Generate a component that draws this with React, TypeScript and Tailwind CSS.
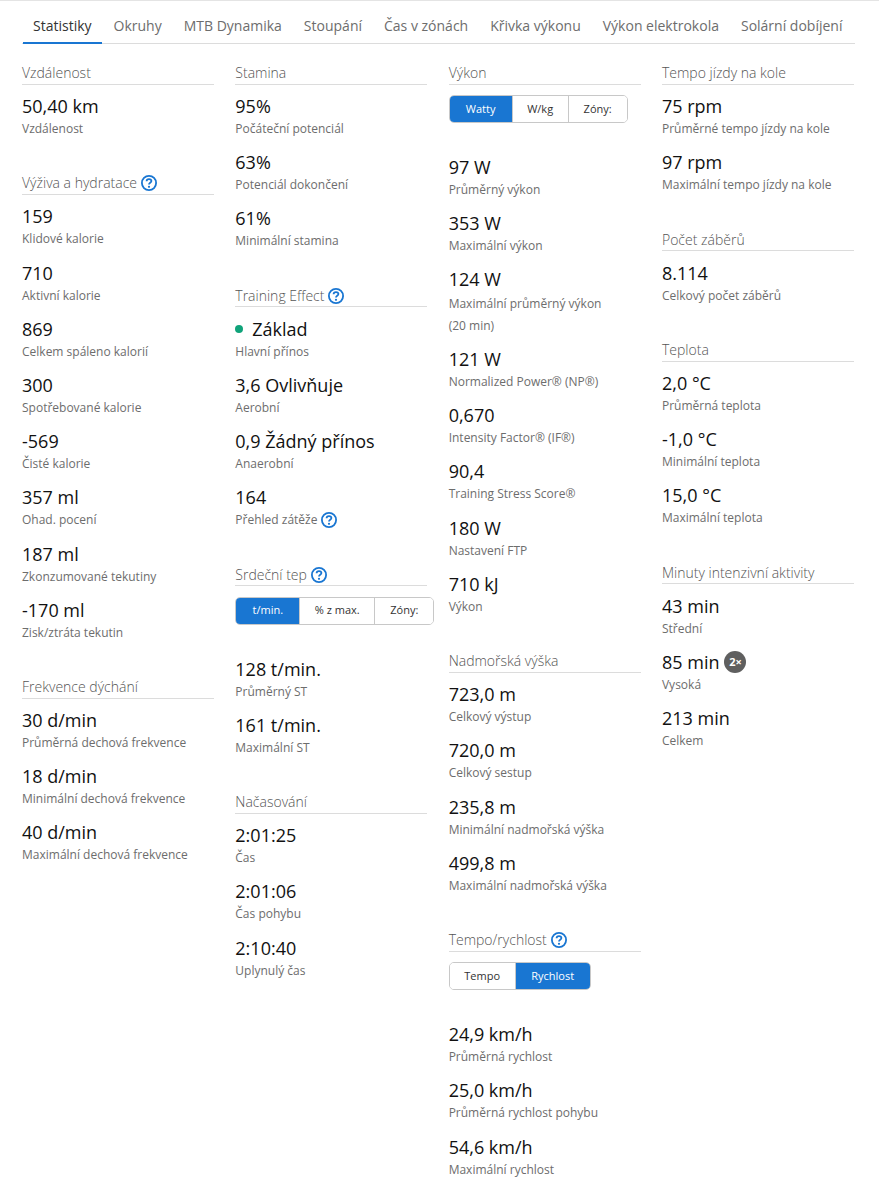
import type { ReactNode } from "react"

const tabs = [
  "Statistiky",
  "Okruhy",
  "MTB Dynamika",
  "Stoupání",
  "Čas v zónách",
  "Křivka výkonu",
  "Výkon elektrokola",
  "Solární dobíjení",
]

function Help() {
  return (
    <svg viewBox="0 0 16 16" className="ml-1 h-4 w-4 shrink-0" fill="none" stroke="#1976d2">
      <circle cx="8" cy="8" r="7.1" strokeWidth="1.8" />
      <path d="M5.6 6.3c0-1.4 1.1-2.2 2.4-2.2 1.3 0 2.4.8 2.4 2 0 1.8-2.4 1.7-2.4 3.4" strokeWidth="1.8" />
      <circle cx="8" cy="11.8" r="1.1" fill="#1976d2" stroke="none" />
    </svg>
  )
}

function Heading({ title, help }: { title: string; help?: boolean }) {
  return (
    <div className="mb-[9.4px] flex h-[21px] items-center border-b border-[#dcdcdc] pb-px text-sm leading-5 font-light text-[#555]">
      {title}
      {help && <Help />}
    </div>
  )
}

function Stat({ value, label, children }: { value: ReactNode; label: ReactNode; children?: ReactNode }) {
  return (
    <div className="mb-[10.2px]">
      <div className="flex h-6 items-center text-lg leading-6 text-[#111]">
        {value}
        {children}
      </div>
      <div className="text-xs leading-[22px] text-[#6d6d6d]">{label}</div>
    </div>
  )
}

function Toggle({ items, active }: { items: { text: string; w: string }[]; active: string }) {
  return (
    <div className="mt-[10.4px] mb-8 flex h-7 w-max overflow-hidden rounded-[5px] border border-[#c8c8c8]">
      {items.map((item) => (
        <div
          key={item.text}
          className={`flex items-center justify-center border-l border-[#c8c8c8] text-[11px] font-medium first:border-l-0 ${item.w} ${
            item.text === active ? "bg-[#1976d2] text-white" : "bg-white text-[#333]"
          }`}
        >
          {item.text}
        </div>
      ))}
    </div>
  )
}

function Section({ children }: { children: ReactNode }) {
  return <section className="mb-[34px]">{children}</section>
}

export default function App() {
  return (
    <div className="min-h-[1184px] border-t border-[#e4e4e4] bg-white px-[22px] font-['Open_Sans',sans-serif]">
      <nav className="flex h-[43px] w-[833px] border-b border-[#dcdcdc] pl-px">
        {tabs.map((tab, i) => (
          <div
            key={tab}
            className={`mr-[2px] h-[43px] whitespace-nowrap border-b-2 px-[10px] pt-[15px] text-sm leading-5 ${
              i === 0 ? "border-[#1976d2] text-[#333]" : "border-transparent text-[#6d6d6d]"
            }`}
          >
            {tab}
          </div>
        ))}
      </nav>

      <div className="mt-[19.6px] grid w-[832px] grid-cols-4 gap-x-[21.3px]">
        <div>
          <Section>
            <Heading title="Vzdálenost" />
            <Stat value="50,40 km" label="Vzdálenost" />
          </Section>
          <Section>
            <Heading title="Výživa a hydratace" help />
            <Stat value="159" label="Klidové kalorie" />
            <Stat value="710" label="Aktivní kalorie" />
            <Stat value="869" label="Celkem spáleno kalorií" />
            <Stat value="300" label="Spotřebované kalorie" />
            <Stat value="-569" label="Čisté kalorie" />
            <Stat value="357 ml" label="Ohad. pocení" />
            <Stat value="187 ml" label="Zkonzumované tekutiny" />
            <Stat value="-170 ml" label="Zisk/ztráta tekutin" />
          </Section>
          <Section>
            <Heading title="Frekvence dýchání" />
            <Stat value="30 d/min" label="Průměrná dechová frekvence" />
            <Stat value="18 d/min" label="Minimální dechová frekvence" />
            <Stat value="40 d/min" label="Maximální dechová frekvence" />
          </Section>
        </div>

        <div>
          <Section>
            <Heading title="Stamina" />
            <Stat value="95%" label="Počáteční potenciál" />
            <Stat value="63%" label="Potenciál dokončení" />
            <Stat value="61%" label="Minimální stamina" />
          </Section>
          <Section>
            <Heading title="Training Effect" help />
            <Stat
              value={
                <>
                  <span className="mr-[9px] h-2 w-2 rounded-full bg-[#10a37a]" />
                  Základ
                </>
              }
              label="Hlavní přínos"
            />
            <Stat value="3,6 Ovlivňuje" label="Aerobní" />
            <Stat value="0,9 Žádný přínos" label="Anaerobní" />
            <Stat
              value="164"
              label={
                <span className="flex h-[22px] items-center">
                  Přehled zátěže
                  <Help />
                </span>
              }
            />
          </Section>
          <Section>
            <Heading title="Srdeční tep" help />
            <Toggle
              active="t/min."
              items={[
                { text: "t/min.", w: "w-[63px]" },
                { text: "% z max.", w: "w-[75px]" },
                { text: "Zóny:", w: "w-[59px]" },
              ]}
            />
            <Stat value="128 t/min." label="Průměrný ST" />
            <Stat value="161 t/min." label="Maximální ST" />
          </Section>
          <Section>
            <Heading title="Načasování" />
            <Stat value="2:01:25" label="Čas" />
            <Stat value="2:01:06" label="Čas pohybu" />
            <Stat value="2:10:40" label="Uplynulý čas" />
          </Section>
        </div>

        <div>
          <Section>
            <Heading title="Výkon" />
            <Toggle
              active="Watty"
              items={[
                { text: "Watty", w: "w-[62px]" },
                { text: "W/kg", w: "w-[56px]" },
                { text: "Zóny:", w: "w-[59px]" },
              ]}
            />
            <Stat value="97 W" label="Průměrný výkon" />
            <Stat value="353 W" label="Maximální výkon" />
            <Stat
              value="124 W"
              label={<span className="block pt-[1.5px]">{"Maximální průměrný výkon (20\u00a0min)"}</span>}
            />
            <Stat value="121 W" label="Normalized Power® (NP®)" />
            <Stat value="0,670" label="Intensity Factor® (IF®)" />
            <Stat value="90,4" label="Training Stress Score®" />
            <Stat value="180 W" label="Nastavení FTP" />
            <Stat value="710 kJ" label="Výkon" />
          </Section>
          <Section>
            <Heading title="Nadmořská výška" />
            <Stat value="723,0 m" label="Celkový výstup" />
            <Stat value="720,0 m" label="Celkový sestup" />
            <Stat value="235,8 m" label="Minimální nadmořská výška" />
            <Stat value="499,8 m" label="Maximální nadmořská výška" />
          </Section>
          <Section>
            <Heading title="Tempo/rychlost" help />
            <Toggle
              active="Rychlost"
              items={[
                { text: "Tempo", w: "w-[65px]" },
                { text: "Rychlost", w: "w-[75px]" },
              ]}
            />
            <Stat value="24,9 km/h" label="Průměrná rychlost" />
            <Stat value="25,0 km/h" label="Průměrná rychlost pohybu" />
            <Stat value="54,6 km/h" label="Maximální rychlost" />
          </Section>
        </div>

        <div>
          <Section>
            <Heading title="Tempo jízdy na kole" />
            <Stat value="75 rpm" label="Průměrné tempo jízdy na kole" />
            <Stat value="97 rpm" label="Maximální tempo jízdy na kole" />
          </Section>
          <Section>
            <Heading title="Počet záběrů" />
            <Stat value="8.114" label="Celkový počet záběrů" />
          </Section>
          <Section>
            <Heading title="Teplota" />
            <Stat value="2,0 °C" label="Průměrná teplota" />
            <Stat value="-1,0 °C" label="Minimální teplota" />
            <Stat value="15,0 °C" label="Maximální teplota" />
          </Section>
          <Section>
            <Heading title="Minuty intenzivní aktivity" />
            <Stat value="43 min" label="Střední" />
            <Stat value="85 min" label="Vysoká">
              <span className="ml-[5px] flex h-[22px] w-[22px] items-center justify-center rounded-full bg-[#5f5f5f] text-[11px] font-bold text-white">
                2×
              </span>
            </Stat>
            <Stat value="213 min" label="Celkem" />
          </Section>
        </div>
      </div>
    </div>
  )
}
